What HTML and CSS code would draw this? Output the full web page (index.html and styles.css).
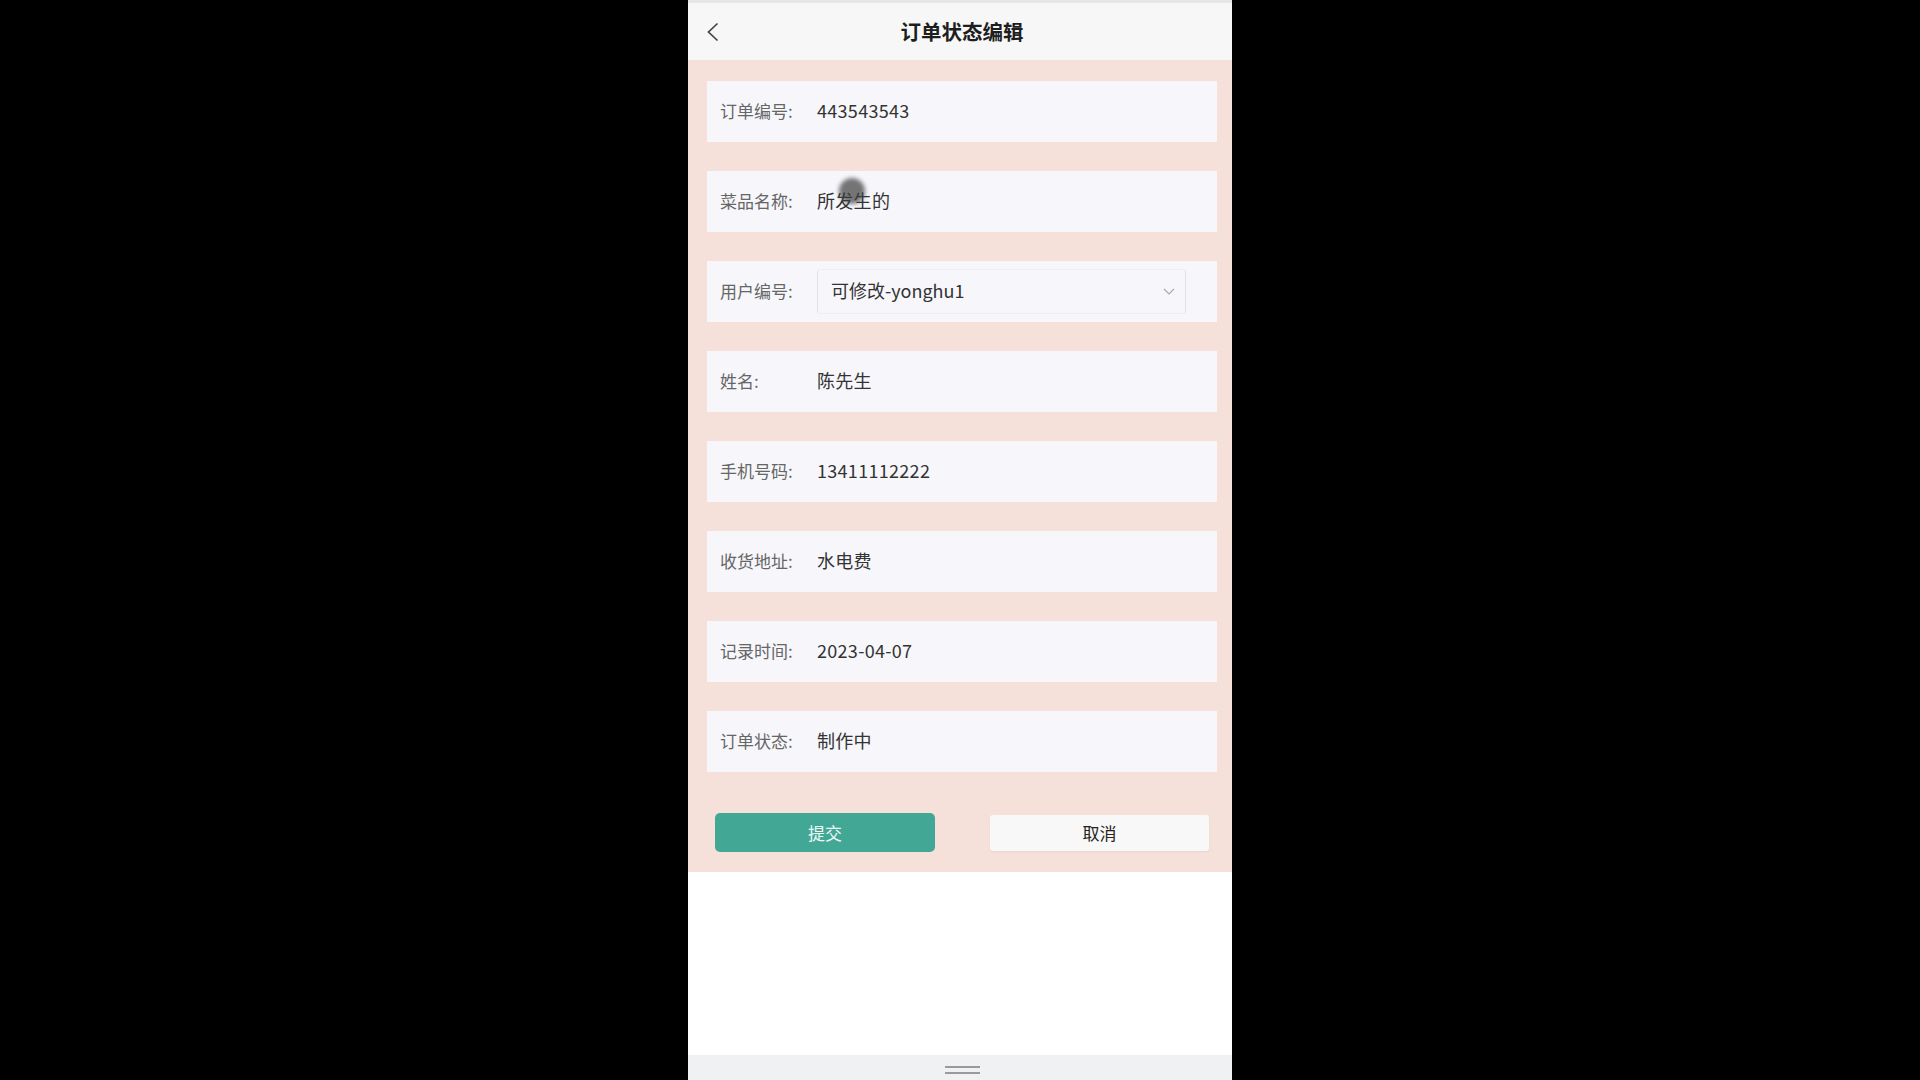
FILE: index.html
```html
<!DOCTYPE html>
<html>
<head>
  <meta charset="UTF-8">
  <title>订单状态编辑</title>
  <link rel="stylesheet" href="styles.css">
</head>
<body>
<div class="phone">
  <div class="status-line"></div>
  <div class="nav-bar">
    <span class="back">
      <svg width="13" height="20" viewBox="0 0 13 20"><path d="M11.5 1.5 L2.5 10 L11.5 18.5" fill="none" stroke="#444" stroke-width="1.7"/></svg>
    </span>
    <div class="nav-title">订单状态编辑</div>
  </div>

  <div class="form-area">
    <div class="form-item">
      <div class="form-label">订单编号:</div>
      <div class="form-value">443543543</div>
    </div>
    <div class="form-item">
      <div class="form-label">菜品名称:</div>
      <div class="form-value">所发生的</div>
      <div class="touch-dot"></div>
    </div>
    <div class="form-item">
      <div class="form-label">用户编号:</div>
      <div class="select-box">
        <span>可修改-yonghu1</span>
        <svg width="12" height="7" viewBox="0 0 12 7"><path d="M1 1 L6 6 L11 1" fill="none" stroke="#aaa" stroke-width="1.2"/></svg>
      </div>
    </div>
    <div class="form-item">
      <div class="form-label">姓名:</div>
      <div class="form-value">陈先生</div>
    </div>
    <div class="form-item">
      <div class="form-label">手机号码:</div>
      <div class="form-value">13411112222</div>
    </div>
    <div class="form-item">
      <div class="form-label">收货地址:</div>
      <div class="form-value">水电费</div>
    </div>
    <div class="form-item">
      <div class="form-label">记录时间:</div>
      <div class="form-value">2023-04-07</div>
    </div>
    <div class="form-item">
      <div class="form-label">订单状态:</div>
      <div class="form-value">制作中</div>
    </div>

    <div class="button-row">
      <button class="btn-submit">提交</button>
      <button class="btn-cancel">取消</button>
    </div>
  </div>

  <div class="blank"></div>

  <div class="home-bar">
    <div class="handle"></div>
  </div>
</div>
</body>
</html>
```

FILE: styles.css
```css
body {
  margin: 0;
  background-color: #000;
  display: flex;
  justify-content: center;
  height: 100vh;
  font-family: "Noto Sans CJK SC", "Noto Sans", sans-serif;
}

.phone {
  width: 544px;
  height: 1080px;
  display: flex;
  flex-direction: column;
  background: #fff;
}

.status-line {
  height: 3px;
  background: #e6e6e6;
}

.nav-bar {
  height: 57px;
  background: #f7f7f7;
  display: flex;
  align-items: center;
  justify-content: center;
  position: relative;
}

.back {
  position: absolute;
  left: 18px;
  top: 19px;
}

.nav-title {
  font-size: 20.5px;
  font-weight: bold;
  color: #1e1e1e;
  margin-left: 4px;
  margin-bottom: 2px;
}

.form-area {
  background: #f5e1da;
  padding: 21px 15px 20px 19px;
}

.form-item {
  height: 61px;
  box-sizing: border-box;
  background: #f7f7fb;
  display: flex;
  align-items: center;
  padding-left: 13px;
  padding-bottom: 3px;
  margin-bottom: 29px;
  position: relative;
}

.form-label {
  width: 97px;
  font-size: 17px;
  color: #666;
}

.form-value {
  font-size: 18px;
  color: #333;
  letter-spacing: 0.3px;
}

.select-box {
  width: 369px;
  height: 45px;
  box-sizing: border-box;
  margin-top: 3px;
  border: 1px solid #e2e2e7;
  border-top-color: #eeeef2;
  border-bottom-color: #eeeef2;
  border-radius: 4px;
  display: flex;
  align-items: center;
  justify-content: space-between;
  padding: 0 10px 0 13px;
  padding-bottom: 3px;
  font-size: 18px;
  color: #333;
}

.select-box svg {
  margin-top: 3px;
}

/* 화면 터치 표시 */
.touch-dot {
  position: absolute;
  left: 132px;
  top: 7px;
  width: 26px;
  height: 26px;
  border-radius: 50%;
  background: rgba(60, 60, 60, 0.7);
  filter: blur(2px);
}

.button-row {
  display: flex;
  justify-content: space-between;
  align-items: center;
  padding: 12px 8px 0 8px;
}

.btn-submit {
  width: 220px;
  height: 39px;
  background: #43a796;
  border: none;
  border-radius: 5px;
  color: #eef8f5;
  font-size: 17px;
  font-family: inherit;
}

.btn-cancel {
  width: 219px;
  height: 36px;
  background: #f8f8f8;
  border: none;
  border-radius: 3px;
  box-shadow: 0 1px 2px rgba(0, 0, 0, 0.06);
  color: #222;
  font-size: 17px;
  font-family: inherit;
}

.blank {
  flex: 1;
  background: #fff;
}

.home-bar {
  height: 25px;
  background: #f0f1f3;
  display: flex;
  justify-content: center;
  align-items: center;
}

.handle {
  width: 35px;
  height: 4px;
  margin-top: 4px;
  margin-left: 4px;
  border-top: 2px solid #9a9a9a;
  border-bottom: 2px solid #9a9a9a;
}
```
